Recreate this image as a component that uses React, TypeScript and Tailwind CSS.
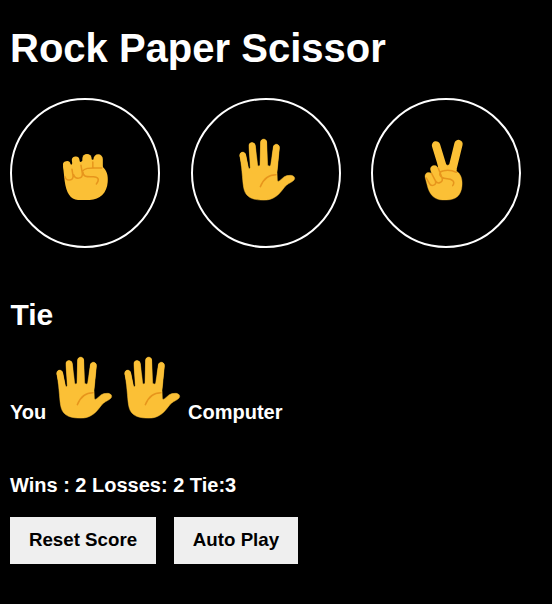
import type { ReactNode } from "react";

const SKIN = "#fbc036";
const LINE = "#e7951c";

function Paper() {
  return (
    <svg width="75" height="80" viewBox="0 0 225 240" className="block shrink-0" fill="none" strokeLinecap="round" strokeLinejoin="round">
      <path
        fill={SKIN}
        stroke={SKIN}
        strokeWidth="1.5"
        d="M30 78C27 63 46 63 47 75L55 113Q58 118 61 113L57 50C55 34 75 34 76 48L83 106Q87 111 90 106L92 38C92 24 110 24 110 38L113 106Q118 111 122 106L130 52C132 38 149 41 148 54L141 127L142 151Q143 157 149 152L163 140Q170 136 181 136C192 136 197 144 192 150Q190 153 183 157C171 163 166 168 160 176C151 188 142 198 130 204C119 210 106 211 92 210C65 209 49 200 43 181C37 160 38 124 30 78Z"
      />
      <g stroke={SKIN} strokeWidth="19">
        <path d="M38.5 77L47 120" />
        <path d="M66.5 48L72 120" />
        <path d="M101 37V120" />
        <path d="M139 53L132 120" />
      </g>
      <path d="M91 170C100 147 115 134 138 134" stroke={LINE} strokeWidth="4.5" />
    </svg>
  );
}

function Rock() {
  return (
    <svg width="70" height="70" viewBox="0 0 210 210" className="block shrink-0" fill="none" strokeLinecap="round" strokeLinejoin="round">
      <g stroke={SKIN} strokeWidth="23">
        <path d="M50.500 75L58 110" />
        <path d="M77 61L84 105" />
      </g>
      <g stroke={SKIN} strokeWidth="28">
        <path d="M111 56V95" />
        <path d="M144.500 57V95" />
      </g>
      <path
        fill={SKIN}
        d="M39 77L55 70L64 74L77 60L92 66L111 54L128 59L144 54L158 80C170 91 175 105 173 127C171 158 150 180 119 180H84C61 179 49 159 44 123Z"
      />
      <path
        d="M66 88L69 107C72 122 49 126 45 110M93 76L97 100C99 117 76 120 71 104M128.500 66V81M97 94C105 83 119 84 139 84H155M99 97C99 112 113 110 130 110C146 110 149 120 139 132"
        stroke={LINE}
        strokeWidth="4.5"
      />
    </svg>
  );
}

function Scissors() {
  return (
    <svg width="70" height="80" viewBox="0 0 210 240" className="block shrink-0" fill="none" strokeLinecap="round" strokeLinejoin="round">
      <g stroke={SKIN} strokeWidth="25">
        <path d="M78 46L100 118" />
        <path d="M145.500 42L127 118" />
      </g>
      <path
        fill={SKIN}
        stroke={SKIN}
        strokeWidth="1"
        d="M84 90L109 104Q114 108 118 103L139 118V123C153 131 158 149 156 168C154 195 138 210 110 210H97C75 209 62 198 54 175L46 145C41 128 57 123 65 131L62 121C58 108 75 102 82 111L84 113Z"
      />
      <path
        d="M65 131L76 152C81 165 64 172 58 160L49 144M85 115L96 143C101 157 82 165 76 152M139 127C127 121 112 120 101 122C87 124 86 135 96 142C106 149 118 144 127 151Q135 157 128 167"
        stroke={LINE}
        strokeWidth="4.5"
      />
    </svg>
  );
}

function MoveButton({ label, children }: { label: string; children: ReactNode }) {
  return (
    <button aria-label={label} className="flex size-[150px] shrink-0 rounded-full border-2 border-white">
      {children}
    </button>
  );
}

export default function App() {
  return (
    <main className="h-[604px] w-[552px] overflow-hidden bg-black pl-[10px] pt-[25px] font-['Liberation_Sans',Arial,sans-serif] font-bold text-white">
      <h1 className="h-[73px] text-[40px] leading-[46px]">Rock Paper Scissor</h1>
      <div className="flex gap-[30.5px]">
        <MoveButton label="Rock">
          <span className="pl-[38px] pt-[40px]"><Rock /></span>
        </MoveButton>
        <MoveButton label="Paper">
          <span className="pl-[37px] pt-[30px]"><Paper /></span>
        </MoveButton>
        <MoveButton label="Scissors">
          <span className="pl-[37px] pt-[30px]"><Scissors /></span>
        </MoveButton>
      </div>
      <h2 className="mt-[50px] h-[49.5px] pl-[0.5px] text-[30px] leading-[34px]">Tie</h2>
      <div className="flex h-[80px] text-xl leading-6">
        <span className="w-[37px] pt-[52.5px]">You</span>
        <Paper />
        <span className="-ml-[7px]"><Paper /></span>
        <span className="-ml-[2px] pt-[52.5px]">Computer</span>
      </div>
      <p className="mt-[45.5px] text-xl leading-6">Wins : 2 Losses: 2 Tie:3</p>
      <div className="mt-5 flex gap-[18px] text-[18.72px] leading-[22px] text-black">
        <button className="h-[47px] w-[146px] bg-[#efefef] pb-[2px]">Reset Score</button>
        <button className="h-[47px] w-[124px] bg-[#efefef] pb-[2px]">Auto Play</button>
      </div>
    </main>
  );
}
